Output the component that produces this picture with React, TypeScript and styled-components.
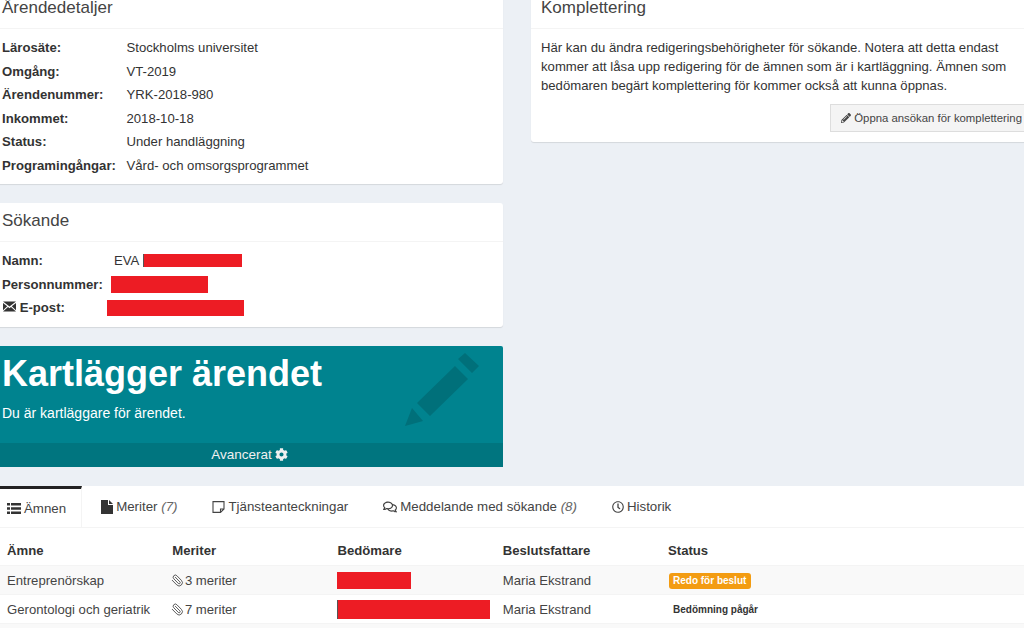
import { createGlobalStyle, styled } from "styled-components";
import { FaCog, FaPencilAlt, FaRegClock, FaRegComments } from "react-icons/fa";
import { Paperclip } from "lucide-react";

const GlobalStyle = createGlobalStyle`
	html, body {
		margin: 0;
		height: 628px;
		overflow: hidden;
		background: #ecf0f5;
		font-family: "Liberation Sans", Arial, sans-serif;
		font-size: 13.15px;
		color: #333;
	}
`;

const details = [
	["Lärosäte:", "Stockholms universitet"],
	["Omgång:", "VT-2019"],
	["Ärendenummer:", "YRK-2018-980"],
	["Inkommet:", "2018-10-18"],
	["Status:", "Under handläggning"],
	["Programingångar:", "Vård- och omsorgsprogrammet"],
];

const subjects = [
	{ name: "Entreprenörskap", merits: "3 meriter", redaction: 74, status: "Redo för beslut", ready: true },
	{ name: "Gerontologi och geriatrik", merits: "7 meriter", redaction: 152, status: "Bedömning pågår", ready: false },
];

const EnvelopeIcon = () => (
	<svg width="13" height="11" viewBox="0 0 14 11" fill="#333" style={{ marginLeft: 1 }}>
		<path d="M0 0h14L7 5.5zM0 1.6v8L4.6 5.2zM14 1.6v8L9.4 5.2zM0 11l5.4-5 1.6 1.3L8.6 6l5.4 5z" />
	</svg>
);

const ListIcon = () => (
	<svg width="14" height="11" viewBox="0 0 14 11" fill="#333">
		<path d="M0 0h3v2.6H0zM4 0h10v2.6H4zM0 4.2h3v2.6H0zM4 4.2h10v2.6H4zM0 8.4h3V11H0zM4 8.4h10V11H4z" />
	</svg>
);

const FileIcon = () => (
	<svg width="12" height="14" viewBox="0 0 12 14" fill="#333">
		<path d="M0 0h7v5h5v9H0zM8 0l4 4H8z" />
	</svg>
);

const NoteIcon = () => (
	<svg width="13" height="12" viewBox="0 0 13 12" fill="none" stroke="#444" strokeWidth="1.1">
		<path d="M1 .6h11v7.4L8.5 11.4H1zM12 8H8.5v3.4" />
	</svg>
);

const App = () => {
	return (
		<Page>
			<GlobalStyle />
			<Columns>
				<LeftColumn>
					<Card>
						<CardHeader $clipped>Ärendedetaljer</CardHeader>
						<DetailBody>
							{details.map(([label, value]) => (
								<DetailRow key={label}>
									<Label>{label}</Label>
									<span>{value}</span>
								</DetailRow>
							))}
						</DetailBody>
					</Card>
					<Card>
						<CardHeader $height={39}>Sökande</CardHeader>
						<ApplicantBody>
							<ApplicantRow>
								<ApplicantLabel $width={112}>Namn:</ApplicantLabel>
								<span>EVA</span>
								<Redaction $width={98} $height={13} $left={4} $sliver />
							</ApplicantRow>
							<ApplicantRow>
								<ApplicantLabel $width={109}>Personnummer:</ApplicantLabel>
								<Redaction $width={97} $height={17} />
							</ApplicantRow>
							<ApplicantRow>
								<ApplicantLabel $width={105}>
									<EnvelopeIcon /> E-post:
								</ApplicantLabel>
								<Redaction $width={137} $height={16} />
							</ApplicantRow>
						</ApplicantBody>
					</Card>
					<Hero>
						<HeroTitle>Kartlägger ärendet</HeroTitle>
						<HeroText>Du är kartläggare för ärendet.</HeroText>
						<HeroPencil viewBox="0 0 74 73">
							<path d="M0 73l7-18 11 13zM12 50L50 13l13 13-38 37zM53 6l7-6 14 13-7 7z" />
						</HeroPencil>
						<HeroFooter>
							Avancerat <FaCog size={13} />
						</HeroFooter>
					</Hero>
				</LeftColumn>
				<RightColumn>
					<Card>
						<CardHeader $clipped $inset>
							Komplettering
						</CardHeader>
						<RightBody>
							<RightText>
								Här kan du ändra redigeringsbehörigheter för sökande. Notera att detta endast kommer att låsa upp
								redigering för de ämnen som är i kartläggning. Ämnen som bedömaren begärt komplettering för kommer
								också att kunna öppnas.
							</RightText>
							<ButtonRow>
								<OpenButton>
									<FaPencilAlt size={10} /> Öppna ansökan för komplettering
								</OpenButton>
							</ButtonRow>
						</RightBody>
					</Card>
				</RightColumn>
			</Columns>
			<TabPanel>
				<TabBar>
					<Tab $active>
						<ListIcon />
						<span>Ämnen</span>
					</Tab>
					<Tab>
						<FileIcon />
						<span>
							Meriter <Count>(7)</Count>
						</span>
					</Tab>
					<Tab>
						<NoteIcon />
						<span>Tjänsteanteckningar</span>
					</Tab>
					<Tab>
						<FaRegComments size={14} />
						<span>
							Meddelande med sökande <Count>(8)</Count>
						</span>
					</Tab>
					<Tab>
						<FaRegClock size={12} />
						<span>Historik</span>
					</Tab>
				</TabBar>
				<TableGrid>
					<HeadCell>Ämne</HeadCell>
					<HeadCell>Meriter</HeadCell>
					<HeadCell>Bedömare</HeadCell>
					<HeadCell>Beslutsfattare</HeadCell>
					<HeadCell>Status</HeadCell>
					{subjects.map((s) => (
						<SubjectRow key={s.name}>
							<BodyCell>{s.name}</BodyCell>
							<BodyCell>
								<ClipIcon size={13} strokeWidth={1.6} /> {s.merits}
							</BodyCell>
							<BodyCell>
								<Redaction $width={s.redaction} $height={s.ready ? 17 : 19} $left={-1} $sliver={!s.ready} />
							</BodyCell>
							<BodyCell>Maria Ekstrand</BodyCell>
							<BodyCell>
								<StatusBadge $ready={s.ready}>{s.status}</StatusBadge>
							</BodyCell>
						</SubjectRow>
					))}
					<SubjectRow />
				</TableGrid>
			</TabPanel>
		</Page>
	);
};

export default App;

const Page = styled.div`
	margin-top: -9px;
	width: 1040px;
`;

const Columns = styled.div`
	display: flex;
	gap: 28px;
	margin-left: -4px;
`;

const LeftColumn = styled.div`
	width: 507px;
	display: flex;
	flex-direction: column;
	gap: 19px;
`;

const RightColumn = styled.div`
	width: 509px;
`;

const Card = styled.section`
	background: #fff;
	border-radius: 3px;
	box-shadow: 0 1px 1px rgba(0, 0, 0, 0.1);
`;

const CardHeader = styled.h3<{ $inset?: boolean; $clipped?: boolean; $height?: number }>`
	margin: 0;
	height: ${(p) => p.$height ?? 38}px;
	box-sizing: border-box;
	padding: ${(p) => (p.$clipped ? 7 : 8)}px 10px 0 ${(p) => (p.$inset ? 10 : 6)}px;
	border-bottom: 1px solid #f4f4f4;
	font-size: 17px;
	line-height: 20px;
	font-weight: 400;
	color: #444;
`;

const DetailBody = styled.div`
	padding: 7px 6px;
`;

const DetailRow = styled.div`
	display: flex;
	height: 23.5px;
	line-height: 23.5px;
`;

const Label = styled.strong`
	width: 124.5px;
`;

const ApplicantBody = styled.div`
	padding: 7px 6px 7.5px;
`;

const ApplicantRow = styled.div`
	display: flex;
	align-items: center;
	height: 23.5px;
`;

const ApplicantLabel = styled.strong<{ $width: number }>`
	width: ${(p) => p.$width}px;
	flex: none;
`;

const Redaction = styled.span<{ $width: number; $height: number; $left?: number; $sliver?: boolean }>`
	display: inline-block;
	width: ${(p) => p.$width}px;
	height: ${(p) => p.$height}px;
	margin-left: ${(p) => p.$left ?? 0}px;
	border-left: ${(p) => (p.$sliver ? "1px solid #555" : "0")};
	background: #ed1c24;
	vertical-align: middle;
`;

const Hero = styled.section`
	position: relative;
	height: 121px;
	display: flex;
	flex-direction: column;
	background: #00838f;
	border-radius: 2px;
	color: #fff;
	padding-left: 6px;
`;

const HeroTitle = styled.h2`
	margin: 7px 0 0;
	font-size: 36px;
	line-height: 42px;
	font-weight: 700;
	white-space: nowrap;
`;

const HeroText = styled.p`
	margin: 8px 0 0;
	font-size: 14px;
	line-height: 20px;
`;

const HeroPencil = styled.svg`
	position: absolute;
	left: 409px;
	top: 7px;
	width: 74px;
	height: 73px;
	fill: #00707a;
`;

const HeroFooter = styled.div`
	margin: auto 0 0 -6px;
	height: 24px;
	box-sizing: border-box;
	padding-bottom: 2px;
	display: flex;
	align-items: center;
	justify-content: center;
	gap: 3px;
	background: #00757f;
	color: #f0f0f0;
	font-size: 13.5px;
`;

const RightBody = styled.div`
	padding: 9px 10px 10px;
`;

const RightText = styled.p`
	margin: 0 0 9px;
	line-height: 19px;
	width: 480px;
`;

const ButtonRow = styled.div`
	display: flex;
	justify-content: flex-end;
`;

const OpenButton = styled.button`
	display: inline-flex;
	align-items: center;
	gap: 3px;
	height: 28px;
	padding: 0 8px 0 10px;
	border: 1px solid #ddd;
	border-right: 0;
	background: #f4f4f4;
	color: #444;
	font: 11.35px "Liberation Sans", Arial, sans-serif;
	white-space: nowrap;
`;

const TabPanel = styled.div`
	margin: 19px 0 0;
	width: 1024px;
	background: #fff;
`;

const TabBar = styled.nav`
	display: flex;
	height: 41px;
	border-bottom: 1px solid #f4f4f4;
	font-size: 13.3px;
`;

const Tab = styled.div<{ $active?: boolean }>`
	display: flex;
	align-items: center;
	gap: 3px;
	height: 41px;
	box-sizing: border-box;
	padding: 0 ${(p) => (p.$active ? "15px" : "17.5px")} 0 ${(p) => (p.$active ? "7px" : "17.5px")};
	margin-right: ${(p) => (p.$active ? 1.5 : 0)}px;
	border-top: ${(p) => (p.$active ? "3px solid #222" : "0")};
	border-right: ${(p) => (p.$active ? "1px solid #f4f4f4" : "0")};
	color: #444;
	white-space: nowrap;
`;

const Count = styled.em`
	color: #666;
`;

const TableGrid = styled.div`
	padding-top: 5px;
	display: grid;
	grid-template-columns: repeat(4, 165.25px) 1fr;
`;

const HeadCell = styled.div`
	font-weight: 700;
	padding: 8px 7px 0;
	height: 32px;
	box-sizing: border-box;
	line-height: 20px;
`;

const SubjectRow = styled.div`
	grid-column: 1 / -1;
	display: grid;
	grid-template-columns: repeat(4, 165.25px) 1fr;
	height: 29px;
	box-sizing: border-box;
	align-items: center;
	border-top: 1px solid #f4f4f4;
	&:nth-child(even) {
		background: #f9f9f9;
	}
`;

const BodyCell = styled.div`
	padding-left: 7px;
	white-space: nowrap;
	color: #444;
`;

const ClipIcon = styled(Paperclip)`
	transform: scaleX(-1);
	color: #444;
	vertical-align: -2px;
	margin: 0 -3px 0 -1px;
`;

const StatusBadge = styled.span<{ $ready: boolean }>`
	display: inline-block;
	margin-left: 1px;
	padding: 3px 5px 3px 4px;
	border-radius: 3px;
	background: ${(p) => (p.$ready ? "#f39c12" : "transparent")};
	color: ${(p) => (p.$ready ? "#fff" : "#333")};
	font-size: 10px;
	font-weight: 700;
	line-height: 10px;
`;
